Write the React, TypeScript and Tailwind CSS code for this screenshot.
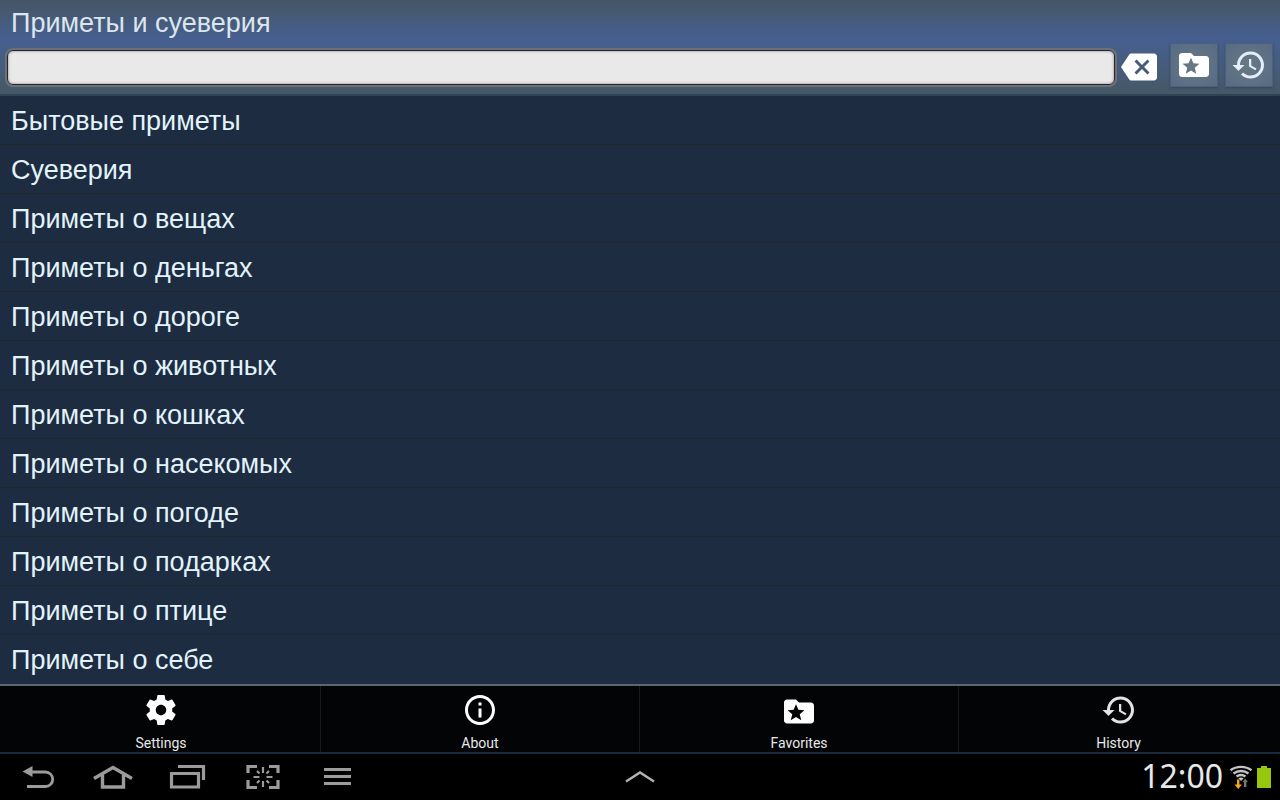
import { useState } from "react"

const topics = [
  "Бытовые приметы",
  "Суеверия",
  "Приметы о вещах",
  "Приметы о деньгах",
  "Приметы о дороге",
  "Приметы о животных",
  "Приметы о кошках",
  "Приметы о насекомых",
  "Приметы о погоде",
  "Приметы о подарках",
  "Приметы о птице",
  "Приметы о себе",
]

function SettingsIcon() {
  return (
    <svg className="w-9 h-9" viewBox="0 0 24 24" fill="currentColor" aria-hidden="true">
      <path d="M19.43 12.98c.04-.32.07-.64.07-.98s-.03-.66-.07-.98l2.11-1.65c.19-.15.24-.42.12-.64l-2-3.46c-.12-.22-.39-.3-.61-.22l-2.49 1c-.52-.4-1.08-.73-1.69-.98l-.38-2.65C14.46 2.18 14.25 2 14 2h-4c-.25 0-.46.18-.49.42l-.38 2.65c-.61.25-1.17.59-1.69.98l-2.49-1c-.23-.09-.49 0-.61.22l-2 3.46c-.13.22-.07.49.12.64l2.11 1.65c-.04.32-.07.65-.07.98s.03.66.07.98l-2.11 1.65c-.19.15-.24.42-.12.64l2 3.46c.12.22.39.3.61.22l2.49-1c.52.4 1.08.73 1.69.98l.38 2.65c.03.24.24.42.49.42h4c.25 0 .46-.18.49-.42l.38-2.65c.61-.25 1.17-.59 1.69-.98l2.49 1c.23.09.49 0 .61-.22l2-3.46c.12-.22.07-.49-.12-.64l-2.11-1.65zM12 15.5c-1.93 0-3.5-1.57-3.5-3.5s1.57-3.5 3.5-3.5 3.5 1.57 3.5 3.5-1.57 3.5-3.5 3.5z" />
    </svg>
  )
}

function InfoIcon() {
  return (
    <svg className="w-9 h-9" viewBox="0 0 24 24" fill="currentColor" aria-hidden="true">
      <path d="M11 17h2v-6h-2v6zm1-15C6.48 2 2 6.48 2 12s4.48 10 10 10 10-4.48 10-10S17.52 2 12 2zm0 18c-4.41 0-8-3.59-8-8s3.59-8 8-8 8 3.59 8 8-3.59 8-8 8zM11 9h2V7h-2v2z" />
    </svg>
  )
}

function FolderStarIcon({ viewBox = "0 0 24 24" }: { viewBox?: string }) {
  return (
    <svg className="w-9 h-9" viewBox={viewBox} fill="currentColor" fillRule="evenodd" aria-hidden="true">
      <path d="M10 4H4c-1.1 0-2 .9-2 2v12c0 1.1.9 2 2 2h16c1.1 0 2-.9 2-2V8c0-1.1-.9-2-2-2h-8l-2-2zM10 7.1l1.6 3.800 4 .3-3.100 2.700 1 4L10 15.700l-3.500 2.200 1-4-3.100-2.700 4-.3z" />
    </svg>
  )
}

function HistoryIcon() {
  return (
    <svg className="w-9 h-9" viewBox="0 0 24 24" fill="currentColor" aria-hidden="true">
      <path d="M13 3c-4.97 0-9 4.03-9 9H1l3.89 3.89.07.14L9 12H6c0-3.87 3.13-7 7-7s7 3.13 7 7-3.13 7-7 7c-1.93 0-3.68-.79-4.94-2.06l-1.42 1.42C8.27 19.99 10.51 21 13 21c4.97 0 9-4.03 9-9s-4.03-9-9-9zm-1 5v5l4.28 2.54.72-1.21-3.5-2.08V8H12z" />
    </svg>
  )
}

function BackspaceIcon() {
  return (
    <svg className="w-9 h-9" viewBox="0 0 24 24" fill="currentColor" aria-hidden="true">
      <path d="M22 3H7c-.69 0-1.23.35-1.59.88L0 12l5.41 8.11c.36.53.9.89 1.59.89h15c1.1 0 2-.9 2-2V5c0-1.1-.9-2-2-2zm-3 12.59L17.59 17 14 13.41 10.41 17 9 15.59 12.59 12 9 8.41 10.41 7 14 10.59 17.59 7 19 8.41 15.41 12 19 15.59z" />
    </svg>
  )
}

const menu = [
  { label: "Settings", icon: <SettingsIcon />, color: "text-white" },
  { label: "About", icon: <InfoIcon />, color: "text-white" },
  { label: "Favorites", icon: <FolderStarIcon viewBox="0 -1 24 24" />, color: "text-white" },
  { label: "History", icon: <HistoryIcon />, color: "text-[#e4e4e4]" },
]

const navKeys = [
  {
    label: "Back",
    icon: (
      <>
        <path d="M9 26.500h18.500a6.500 6.500 0 0 0 0-14.500H13" fill="none" stroke="currentColor" strokeWidth="2.800" />
        <path d="M4.500 11.500L14.500 6v11z" fill="currentColor" />
      </>
    ),
  },
  {
    label: "Home",
    icon: (
      <path d="M1 18.500L20 7.500l19 11M9.500 15v12h21V15" fill="none" stroke="currentColor" strokeWidth="3.400" />
    ),
  },
  {
    label: "Recent apps",
    icon: (
      <path d="M3.500 13.500h27v13.500h-27zM10 6.500h25.500V20" fill="none" stroke="currentColor" strokeWidth="3.200" />
    ),
  },
  {
    label: "Screenshot",
    icon: (
      <g fill="none" stroke="currentColor">
        <path d="M5 13V6.500h9M26 6.500h9V13M35 20v7.500h-9M14 27.500H5V20" strokeWidth="3.200" />
        <path d="M20 7v6M20 21v6M10.500 17h6M23.500 17h6M14 11l2.500 2.500M26 11l-2.500 2.500M14 23l2.500-2.500M26 23l-2.500-2.500" strokeWidth="2.200" />
      </g>
    ),
  },
  {
    label: "Menu",
    icon: <path d="M6 9.500h27M6 16.500h27M6 23.500h27" fill="none" stroke="currentColor" strokeWidth="3" />,
  },
]

export default function App() {
  const [query, setQuery] = useState("")

  return (
    <div className="flex flex-col min-h-screen bg-[#1d2c41] font-['Liberation_Sans',sans-serif] text-[27px]">
      {/* Title and search */}
      <header className="bg-linear-to-b from-[#465565] via-[#465f90] via-42% to-[#465865]">
        <h1 className="pl-[11px] h-[43px] leading-[46px] text-[#dce6ec]">Приметы и суеверия</h1>
        <div className="flex items-center px-[7px] pb-[7px]">
          <input
            type="text"
            aria-label="Поиск"
            value={query}
            onChange={(e) => setQuery(e.target.value)}
            className="flex-1 min-w-0 h-[35px] mt-[5px] px-2 rounded-md border border-[#24272f] bg-[#e9e9e9] text-black outline-2 outline-[#6c7078] shadow-[inset_0_0_3px_#8a8276]"
          />
          <button type="button" aria-label="Clear" className="ml-1.5 mt-1 text-white" onClick={() => setQuery("")}>
            <BackspaceIcon />
          </button>
          <button type="button" aria-label="Favorites" className="flex justify-center items-center w-12 h-[44px] ml-[13px] border border-[#4b607c] bg-radial from-[#687884] to-[#566b85] text-white shadow-[0_1px_2px_#35485a]">
            <FolderStarIcon />
          </button>
          <button type="button" aria-label="History" className="flex justify-center items-center w-12 h-[44px] ml-[7px] border border-[#4b607c] bg-radial from-[#687884] to-[#566b85] text-[#e3edf8] shadow-[0_1px_2px_#35485a]">
            <HistoryIcon />
          </button>
        </div>
      </header>

      <ul className="flex-1 border-t-2 border-[#2c4358]">
        {topics.map((topic) => (
          <li key={topic} className="border-b border-[#22262c] last:border-b-0">
            <a href="#" className="block pl-[11px] h-12 leading-[50px] text-[#e2f3fc]">
              {topic}
            </a>
          </li>
        ))}
      </ul>

      {/* Options menu */}
      <div className="grid grid-cols-4 px-0.5 border-t-2 border-[#5c6670] bg-[#030406] font-[Roboto,sans-serif] text-sm">
        {menu.map((item) => (
          <button
            key={item.label}
            type="button"
            className="flex flex-col items-center h-[66px] pt-1.5 border-r border-[#17191c] last:border-r-0 text-[#e8e8e8]"
          >
            <span className={item.color}>{item.icon}</span>
            <span className="mt-1.5 leading-[18px]">{item.label}</span>
          </button>
        ))}
      </div>

      {/* System bar */}
      <footer className="grid grid-cols-[1fr_auto_1fr] items-center h-12 border-t-2 border-[#182a3c] bg-black text-[#9b9b9b]">
        <div className="flex">
          {navKeys.map((key) => (
            <button key={key.label} type="button" aria-label={key.label} className="flex justify-center w-[75px]">
              <svg className="w-10 h-[34px]" viewBox="0 0 40 34" aria-hidden="true">
                {key.icon}
              </svg>
            </button>
          ))}
        </div>
        <button type="button" aria-label="Show panel">
          <svg className="w-8 h-4" viewBox="0 0 32 16" fill="none" stroke="#b4b4b4" strokeWidth="2.400" aria-hidden="true">
            <path d="M2 12.500L16 3.500l14 9" />
          </svg>
        </button>
        <div className="flex items-center justify-end pr-[9px]">
          <span className="pb-0.5 font-['Noto_Sans',sans-serif] text-[32px] leading-[42px] text-[#e8e8e8]">12:00</span>
          <svg className="w-6 h-6 ml-1.5" viewBox="0 0 24 24" fill="none" aria-hidden="true">
            <g stroke="#c4c4c4" strokeWidth="2.400">
              <path d="M1.500 5.300c6-4.600 15-4.600 21 0" />
              <path d="M4.500 8.500c4.500-3.400 10.500-3.400 15 0" />
              <path d="M7.500 11.600c3-2.100 6-2.100 9 0" />
            </g>
            <path d="M9.300 13.200q2.700-1.400 5.400 0L12 16z" fill="#c4c4c4" />
            <path d="M8 14.500v5H5.500l3.700 4.500 3.700-4.500h-2.500v-5z" fill="#f5a51c" />
            <path d="M15 22v-5h-1.500l2.700-3.500 2.700 3.500H17.400v5z" fill="#75757d" />
          </svg>
          <svg className="w-3.5 h-[22px] ml-1" viewBox="0 0 14 22" fill="#95c80c" aria-hidden="true">
            <path d="M4 0h6v2h4v20H0V2h4z" />
          </svg>
        </div>
      </footer>
    </div>
  )
}
